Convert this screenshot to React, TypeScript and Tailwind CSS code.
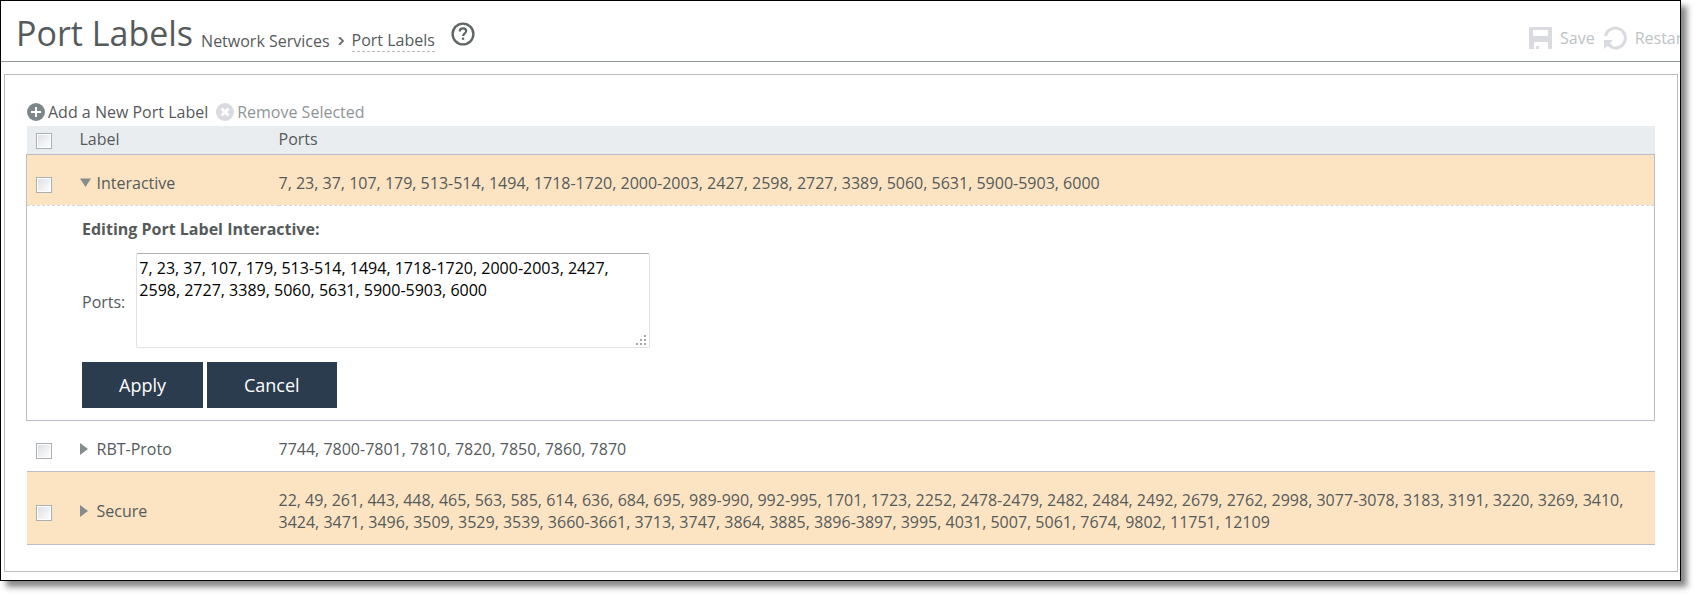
import { useState } from "react"

const portLabels = [
  {
    name: "Interactive",
    ports:
      "7, 23, 37, 107, 179, 513-514, 1494, 1718-1720, 2000-2003, 2427, 2598, 2727, 3389, 5060, 5631, 5900-5903, 6000",
  },
  {
    name: "RBT-Proto",
    ports: "7744, 7800-7801, 7810, 7820, 7850, 7860, 7870",
  },
  {
    name: "Secure",
    ports:
      "22, 49, 261, 443, 448, 465, 563, 585, 614, 636, 684, 695, 989-990, 992-995, 1701, 1723, 2252, 2478-2479, 2482, 2484, 2492, 2679, 2762, 2998, 3077-3078, 3183, 3191, 3220, 3269, 3410, 3424, 3471, 3496, 3509, 3529, 3539, 3660-3661, 3713, 3747, 3864, 3885, 3896-3897, 3995, 4031, 5007, 5061, 7674, 9802, 11751, 12109",
  },
]

function HelpIcon() {
  return (
    <svg className="h-6 w-6" viewBox="0 0 24 24" fill="none" stroke="#5f6665">
      <circle cx="12" cy="12" r="10.4" strokeWidth="2.4" />
      <path d="M8.8 9.4c0-1.9 1.3-3 3.2-3s3.2 1 3.2 2.7c0 2.3-3.1 2.4-3.1 5" strokeWidth="2.2" />
      <path d="M12 15.6v2.2" strokeWidth="2.4" />
    </svg>
  )
}

function SaveIcon() {
  return (
    <svg className="h-6 w-6" viewBox="0 0 24 24" fill="#d9dbe0">
      <path
        fillRule="evenodd"
        d="M2 1h21a1 1 0 0 1 1 1v21h-4v-7H6v7H1V2a1 1 0 0 1 1-1zM5 4v6h15V4z"
      />
      <path d="M8 20h3v3H8z" />
    </svg>
  )
}

function RestartIcon() {
  return (
    <svg className="h-6 w-6" viewBox="0 0 24 24" fill="none">
      <path d="M2.5 10A10 10 0 1 1 8 21" stroke="#d9dbe0" strokeWidth="3" />
      <path d="M1 14h9l-3 3 3 3-2 2-4-2-3 3z" fill="#d9dbe0" />
    </svg>
  )
}

function Checkbox({ label }: { label: string }) {
  return (
    <input
      type="checkbox"
      aria-label={label}
      className="mt-1 block h-4 w-4 appearance-none border border-[#abaeb2] bg-linear-to-br from-[#dcdfe3] to-white shadow-[inset_0_0_0_1px_#fff] checked:bg-gray-500"
    />
  )
}

function Arrow({ open }: { open: boolean }) {
  return (
    <svg className="h-3 w-3" viewBox="0 0 12 12" fill="#848c8e">
      {open ? <path d="M0 1.5h11L5.5 10z" /> : <path d="M0 0v12l8-6z" />}
    </svg>
  )
}

export default function App() {
  const [expanded, setExpanded] = useState("Interactive")

  return (
    <div className="min-h-screen bg-white font-['Open_Sans',sans-serif] text-base leading-[22px] text-[#555a5b]">
      <div className="mr-4 border border-black shadow-[6px_6px_6px_0px_#888]">
        {/* Page header */}
        <header className="flex h-[61px] items-start overflow-hidden border-b border-[#8f9798] pl-[15px]">
          <h1 className="mt-2 text-[34px] leading-12">Port Labels</h1>
          <nav className="mt-7 ml-2 flex items-center gap-2">
            <a href="#services">Network Services</a>
            <svg className="h-2 w-1.5" viewBox="0 0 6 8" fill="none" stroke="#6a706f" strokeWidth="1.8">
              <path d="M1 0l4 4-4 4" />
            </svg>
            <a href="#labels" className="border-b border-dashed border-[#b5bbbc]">
              Port Labels
            </a>
          </nav>
          <button type="button" aria-label="Help" className="mt-[21px] ml-4">
            <HelpIcon />
          </button>
          <div className="-mr-2 ml-auto flex gap-2 pt-[25px] text-[#bcc3c5]">
            <button type="button" className="flex items-center gap-2">
              <SaveIcon />
              Save
            </button>
            <button type="button" className="flex items-center gap-2">
              <RestartIcon />
              Restart
            </button>
          </div>
        </header>

        <main className="mt-3 mr-0.5 mb-2 ml-[3px] border border-[#b9bec2] pt-[26px] pr-[22px] pb-[26px] pl-[21px]">
          {/* Table actions */}
          <div className="flex h-[25px] items-start gap-2 pl-px">
            <button type="button" className="flex items-center gap-[3px]">
              <svg className="h-[18px] w-[18px]" viewBox="0 0 18 18">
                <circle cx="9" cy="9" r="9" fill="#7d8789" />
                <path d="M9 4v10M4 9h10" stroke="#fff" strokeWidth="2" />
              </svg>
              Add a New Port Label
            </button>
            <button type="button" className="flex items-center gap-[3px] text-[#8f9597]">
              <svg className="h-[18px] w-[18px]" viewBox="0 0 18 18">
                <circle cx="9" cy="9" r="9" fill="#d9dbe0" />
                <path d="M5.5 5.5l7 7M12.5 5.5l-7 7" stroke="#fff" strokeWidth="2.6" />
              </svg>
              Remove Selected
            </button>
          </div>

          <table className="w-full table-fixed border-collapse text-left">
            <colgroup>
              <col className="w-[53px]" />
              <col className="w-[199px]" />
              <col />
            </colgroup>
            <thead>
              <tr className="h-7 bg-[#e9edf0]">
                <th className="pb-0.5 pl-[9px] font-normal">
                  <Checkbox label="Select all" />
                </th>
                <th className="pb-0.5 font-normal">Label</th>
                <th className="pb-0.5 font-normal">Ports</th>
              </tr>
            </thead>
            {portLabels.map((item, index) => {
              const open = item.name === expanded
              return (
                <tbody key={item.name} className={open ? "border border-[#b9bec6]" : "border-y border-[#b9bec6]"}>
                  <tr className={index % 2 === 0 ? "bg-[#fce4c3]" : "bg-white"}>
                    <td className="pt-[17px] pb-[11px] pl-[9px]">
                      <Checkbox label={`Select ${item.name}`} />
                    </td>
                    <td className="pt-[17px] pb-[11px]">
                      <button
                        type="button"
                        className="flex items-center gap-[5px]"
                        onClick={() => setExpanded(open ? "" : item.name)}
                      >
                        <Arrow open={open} />
                        {item.name}
                      </button>
                    </td>
                    <td className="pt-[17px] pr-4 pb-[11px]">{item.ports}</td>
                  </tr>
                  {open && (
                    <tr className="border-t border-dashed border-[#d5d8db]">
                      <td colSpan={3} className="pt-3 pr-4 pb-3 pl-[55px]">
                        <h2 className="font-bold">Editing Port Label {item.name}:</h2>
                        <div className="mt-[13px] flex items-center gap-[11px]">
                          <label htmlFor="ports" className="pt-1">
                            Ports:
                          </label>
                          <div className="relative">
                            <textarea
                              id="ports"
                              defaultValue={item.ports}
                              className="block h-[95px] w-[514px] resize-none rounded-xs border border-[#dfe2e8] border-t-[#abadb3] px-0.5 py-[3px] text-black"
                            />
                            <svg className="absolute right-[3px] bottom-0.5 h-3 w-3" viewBox="0 0 12 12" fill="#a5a7aa">
                              <path d="M9 1h2v2H9zM5 5h2v2H5zM9 5h2v2H9zM1 9h2v2H1zM5 9h2v2H5zM9 9h2v2H9z" />
                            </svg>
                          </div>
                        </div>
                        <div className="mt-[14px] flex gap-1 text-lg text-white">
                          <button type="button" className="h-[46px] bg-[#2c3c4f] px-[37px]">
                            Apply
                          </button>
                          <button type="button" className="h-[46px] bg-[#2c3c4f] px-[37px]">
                            Cancel
                          </button>
                        </div>
                      </td>
                    </tr>
                  )}
                </tbody>
              )
            })}
          </table>
        </main>
      </div>
    </div>
  )
}
